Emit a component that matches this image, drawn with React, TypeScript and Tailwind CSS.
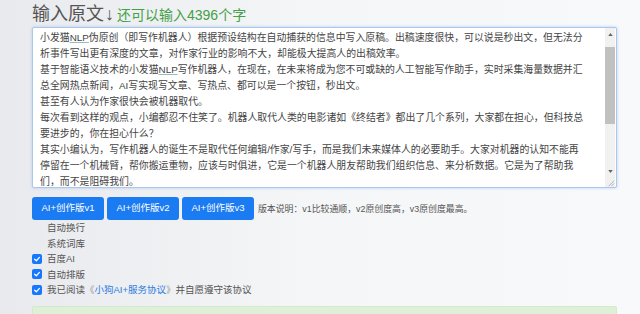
import React from "react";

const lines = [
  <>小发猫<u className="decoration-[#9bb]">NLP</u>伪原创（即写作机器人）根据预设结构在自动捕获的信息中写入原稿。出稿速度很快，可以说是秒出文，但无法分</>,
  <>析事件写出更有深度的文章，对作家行业的影响不大，却能极大提高人的出稿效率。</>,
  <>基于智能语义技术的小发猫<u className="decoration-[#9bb]">NLP</u>写作机器人，在现在，在未来将成为您不可或缺的人工智能写作助手，实时采集海量数据并汇</>,
  <>总全网热点新闻，AI写实现写文章、写热点、都可以是一个按钮，秒出文。</>,
  <>甚至有人认为作家很快会被机器取代。</>,
  <>每次看到这样的观点，小编都忍不住笑了。机器人取代人类的电影诸如《终结者》都出了几个系列，大家都在担心，但科技总</>,
  <>要进步的，你在担心什么？</>,
  <>其实小编认为，写作机器人的诞生不是取代任何编辑/作家/写手，而是我们未来媒体人的必要助手。大家对机器的认知不能再</>,
  <>停留在一个机械臂，帮你搬运重物，应该与时俱进，它是一个机器人朋友帮助我们组织信息、来分析数据。它是为了帮助我</>,
  <>们，而不是阻碍我们。</>,
  <>小编将在下面与大家分享一篇经过润色，是否操作简单的写作助手小发猫NLP伪原创机器人，对于长期有意做好原创写作的专业</>,
];

function Check({ on }: { on: boolean }) {
  if (!on) return <span className="w-[10px] h-[10px] rounded-[2px] bg-[#e9ebee] shrink-0" />;
  return (
    <span className="w-[10px] h-[10px] rounded-[2px] bg-[#1677ff] shrink-0 flex items-center justify-center">
      <svg viewBox="0 0 10 10" className="w-[8px] h-[8px]">
        <path d="M2 5.2 L4.2 7.2 L8 3" fill="none" stroke="white" strokeWidth="1.6" strokeLinecap="round" strokeLinejoin="round" />
      </svg>
    </span>
  );
}

const options = [
  { label: "自动换行", on: false },
  { label: "系统词库", on: false },
  { label: "百度AI", on: true },
  { label: "自动排版", on: true },
];

export default function App() {
  return (
    <div className="h-[314px] w-full bg-gradient-to-r from-[#e9eaed] via-[#f5f6f8] to-[#f8f9fa] font-['Liberation_Sans','Noto_Sans_CJK_SC',sans-serif] overflow-hidden">
      <div className="pl-[32px] pr-[23px] pt-[2px]">
        <div className="flex items-baseline h-[25px]">
          <span className="text-[18px] leading-[24px] text-[#555]">输入原文<span className="ml-[1px] font-light">↓</span></span>
          <span className="ml-[3px] text-[14px] text-[#43a047]">还可以输入4396个字</span>
        </div>

        <div className="h-[161px] flex bg-white border border-[#a9c9ec] rounded-[2px] shadow-[0_0_3px_rgba(100,150,230,0.45)]">
          <div className="flex-1 overflow-hidden pl-[7px] pt-[2px] text-[9.9px] leading-[16px] text-[#444]">
            {lines.map((l, i) => (
              <div key={i} className="whitespace-nowrap">{l}</div>
            ))}
          </div>
          <div className="w-[10px] flex flex-col bg-[#f1f1f1] mr-[1px]">
            <div className="h-[12px] flex items-center justify-center">
              <svg viewBox="0 0 6 4" className="w-[5px] h-[3px]"><path d="M0 4 L3 0 L6 4Z" fill="#666" /></svg>
            </div>
            <div className="flex-1 flex flex-col">
              <div className="h-[77px] bg-[#c1c1c1] mt-[7px]" />
            </div>
            <div className="h-[12px] flex items-center justify-center">
              <svg viewBox="0 0 6 4" className="w-[5px] h-[3px]"><path d="M0 0 L3 4 L6 0Z" fill="#666" /></svg>
            </div>
            <div className="h-[10px] flex items-end justify-end">
              <svg viewBox="0 0 10 10" className="w-[9px] h-[9px]">
                <path d="M9 3 L3 9 M9 6 L6 9" stroke="#aaa" strokeWidth="1" />
              </svg>
            </div>
          </div>
        </div>

        <div className="mt-[9px] flex items-center gap-[3px]">
          {["AI+创作版v1", "AI+创作版v2", "AI+创作版v3"].map((t) => (
            <button key={t} className="h-[23px] w-[72px] rounded-[3px] bg-[#1a7bf3] text-white text-[9.5px]">
              {t}
            </button>
          ))}
          <span className="ml-[1px] text-[8.9px] leading-[12px] text-[#555] whitespace-nowrap">
            版本说明：v1比较通顺，v2原创度高，v3原创度最高。
          </span>
        </div>

        <div className="flex flex-col text-[9.5px] text-[#555] leading-[15.5px]">
          {options.map((o) => (
            <label key={o.label} className="flex items-center gap-[5px]">
              <Check on={o.on} />
              <span>{o.label}</span>
            </label>
          ))}
          <label className="flex items-center gap-[5px]">
            <Check on={true} />
            <span>
              我已阅读<span className="text-[#999]">《</span>
              <span className="text-[#2b7de0]">小狗AI+服务协议</span>
              <span className="text-[#999]">》</span>并自愿遵守该协议
            </span>
          </label>
        </div>

        <div className="mt-[8px] h-[30px] bg-[#dff0d8] border border-[#d3ebc8] rounded-[2px]" />
      </div>
    </div>
  );
}
